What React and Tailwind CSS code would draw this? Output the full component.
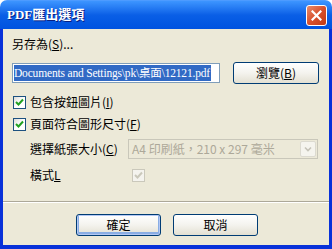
import React from "react";

const cjk = { fontFamily: '"Liberation Serif", "Noto Sans CJK TC", serif' };
const sans = { fontFamily: '"Noto Sans CJK TC", "Liberation Sans", sans-serif' };

function Check({ disabled }) {
  return (
    <div
      className={
        "w-[13px] h-[13px] border flex items-center justify-center shrink-0 " +
        (disabled ? "border-[#cac8bb] bg-[#f4f3ee]" : "border-[#1c5180] bg-gradient-to-br from-[#dcdcd7] via-white to-white")
      }
    >
      <svg width="9" height="9" viewBox="0 0 9 9">
        <path
          d="M1 4 L3.5 6.5 L8 1.5"
          fill="none"
          stroke={disabled ? "#cac8bb" : "#21a121"}
          strokeWidth="2"
        />
      </svg>
    </div>
  );
}

function XPButton({ children, className = "" }) {
  return (
    <div
      className={
        "h-[22px] rounded-[3px] border border-[#003c74] bg-gradient-to-b from-white via-[#f4f3ee] to-[#e3e0d2] flex items-center justify-center text-[12px] text-black " +
        className
      }
      style={sans}
    >
      {children}
    </div>
  );
}

export default function App() {
  return (
    <div className="w-[332px] h-[249px] bg-white overflow-hidden">
      <div className="w-[332px] h-[249px] flex flex-col rounded-t-[7px] overflow-hidden">
        {/* Title bar */}
        <div className="h-[29px] shrink-0 bg-gradient-to-b from-[#3d95ff] via-[#0a5fe6] to-[#0053e0] flex items-center pl-[7px] pr-[5px] border-t border-[#4d9bff]">
          <div
            className="text-white font-bold text-[13px] flex-1 [text-shadow:1px_1px_0_#0a1e80]"
            style={cjk}
          >
            PDF匯出選項
          </div>
          <div className="w-[21px] h-[21px] rounded-[3px] border border-white bg-gradient-to-br from-[#e68a6a] via-[#d8502c] to-[#c13a14] flex items-center justify-center">
            <svg width="11" height="11" viewBox="0 0 11 11">
              <path d="M1.5 1.5 L9.5 9.5 M9.5 1.5 L1.5 9.5" stroke="white" strokeWidth="2.2" strokeLinecap="square" />
            </svg>
          </div>
        </div>
        {/* Body */}
        <div className="flex-1 flex flex-col bg-[#ece9d8] border-l-[3px] border-r-[3px] border-b-[4px] border-[#0831d9] text-[12px] text-black" style={sans}>
          <div className="pl-[9px] pt-[8px] h-[33px] leading-[14px]">
            另存為(<span className="underline">S</span>)...
          </div>
          <div className="flex items-center pl-[9px] h-[22px]">
            <div className="w-[208px] h-[20px] bg-white border border-[#7f9db9] flex items-center pl-[1px] overflow-hidden">
              <div className="bg-[#316ac5] text-white h-[16px] leading-[16px] whitespace-nowrap pr-[1px] text-[11.5px] tracking-[-0.18px]" style={cjk}>
                Documents and Settings\pk\桌面\12121.pdf
              </div>
            </div>
            <XPButton className="ml-[13px] w-[86px]">
              瀏覽(<span className="underline">B</span>)
            </XPButton>
          </div>
          <div className="flex items-center pl-[10px] mt-[11px] h-[14px] gap-[4px]">
            <Check />
            <span>包含按鈕圖片(<span className="underline">I</span>)</span>
          </div>
          <div className="flex items-center pl-[10px] mt-[8px] h-[14px] gap-[4px]">
            <Check />
            <span>頁面符合圖形尺寸(<span className="underline">F</span>)</span>
          </div>
          <div className="flex items-center pl-[27px] mt-[8px] h-[20px]">
            <span className="w-[98px]">選擇紙張大小(<span className="underline">C</span>)</span>
            <div className="w-[190px] h-[20px] border border-[#c9c7ba] flex items-center justify-between pl-[3px] pr-[1px]">
              <span className="text-[#aca899]">A4 印刷紙，210 x 297 毫米</span>
              <div className="w-[16px] h-[16px] rounded-[2px] border border-[#dcdad0] bg-[#f5f4ee] flex items-center justify-center">
                <svg width="8" height="6" viewBox="0 0 8 6">
                  <path d="M1 1.5 L4 4.5 L7 1.5" fill="none" stroke="#c5c3b8" strokeWidth="1.6" />
                </svg>
              </div>
            </div>
          </div>
          <div className="flex items-center pl-[27px] mt-[9px] h-[14px]">
            <span className="w-[102px]">橫式<span className="underline">L</span></span>
            <Check disabled />
          </div>
          <div className="mt-[19px] h-[2px] border-t border-[#aca899] border-b border-b-white" />
          <div className="flex items-center pl-[73px] mt-[11px] gap-[12px]">
            <XPButton className="w-[85px] shadow-[inset_0_0_0_1px_#b4c8f4,inset_0_-1px_0_2px_#89ade4]">確定</XPButton>
            <XPButton className="w-[85px]">取消</XPButton>
          </div>
        </div>
      </div>
    </div>
  );
}
